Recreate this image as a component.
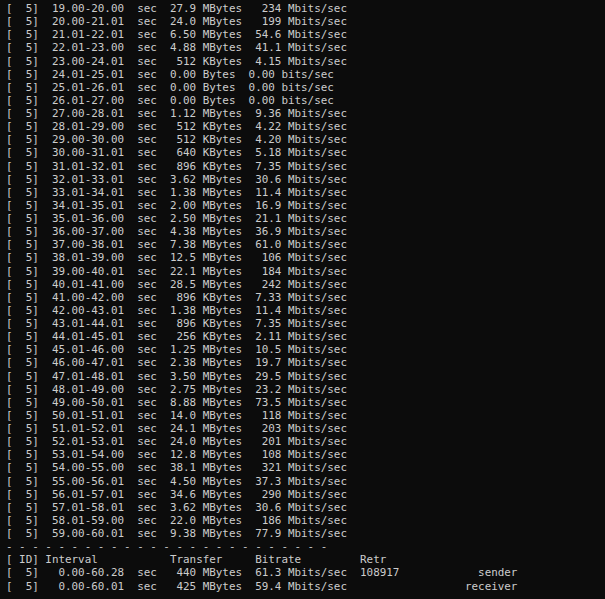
const rows: [string, string, string, string, string][] = [
  ["19.00-20.00", "27.9", "MBytes", "234", "Mbits"],
  ["20.00-21.01", "24.0", "MBytes", "199", "Mbits"],
  ["21.01-22.01", "6.50", "MBytes", "54.6", "Mbits"],
  ["22.01-23.00", "4.88", "MBytes", "41.1", "Mbits"],
  ["23.00-24.01", "512", "KBytes", "4.15", "Mbits"],
  ["24.01-25.01", "0.00", "Bytes", "0.00", "bits"],
  ["25.01-26.01", "0.00", "Bytes", "0.00", "bits"],
  ["26.01-27.00", "0.00", "Bytes", "0.00", "bits"],
  ["27.00-28.01", "1.12", "MBytes", "9.36", "Mbits"],
  ["28.01-29.00", "512", "KBytes", "4.22", "Mbits"],
  ["29.00-30.00", "512", "KBytes", "4.20", "Mbits"],
  ["30.00-31.01", "640", "KBytes", "5.18", "Mbits"],
  ["31.01-32.01", "896", "KBytes", "7.35", "Mbits"],
  ["32.01-33.01", "3.62", "MBytes", "30.6", "Mbits"],
  ["33.01-34.01", "1.38", "MBytes", "11.4", "Mbits"],
  ["34.01-35.01", "2.00", "MBytes", "16.9", "Mbits"],
  ["35.01-36.00", "2.50", "MBytes", "21.1", "Mbits"],
  ["36.00-37.00", "4.38", "MBytes", "36.9", "Mbits"],
  ["37.00-38.01", "7.38", "MBytes", "61.0", "Mbits"],
  ["38.01-39.00", "12.5", "MBytes", "106", "Mbits"],
  ["39.00-40.01", "22.1", "MBytes", "184", "Mbits"],
  ["40.01-41.00", "28.5", "MBytes", "242", "Mbits"],
  ["41.00-42.00", "896", "KBytes", "7.33", "Mbits"],
  ["42.00-43.01", "1.38", "MBytes", "11.4", "Mbits"],
  ["43.01-44.01", "896", "KBytes", "7.35", "Mbits"],
  ["44.01-45.01", "256", "KBytes", "2.11", "Mbits"],
  ["45.01-46.00", "1.25", "MBytes", "10.5", "Mbits"],
  ["46.00-47.01", "2.38", "MBytes", "19.7", "Mbits"],
  ["47.01-48.01", "3.50", "MBytes", "29.5", "Mbits"],
  ["48.01-49.00", "2.75", "MBytes", "23.2", "Mbits"],
  ["49.00-50.01", "8.88", "MBytes", "73.5", "Mbits"],
  ["50.01-51.01", "14.0", "MBytes", "118", "Mbits"],
  ["51.01-52.01", "24.1", "MBytes", "203", "Mbits"],
  ["52.01-53.01", "24.0", "MBytes", "201", "Mbits"],
  ["53.01-54.00", "12.8", "MBytes", "108", "Mbits"],
  ["54.00-55.00", "38.1", "MBytes", "321", "Mbits"],
  ["55.00-56.01", "4.50", "MBytes", "37.3", "Mbits"],
  ["56.01-57.01", "34.6", "MBytes", "290", "Mbits"],
  ["57.01-58.01", "3.62", "MBytes", "30.6", "Mbits"],
  ["58.01-59.00", "22.0", "MBytes", "186", "Mbits"],
  ["59.00-60.01", "9.38", "MBytes", "77.9", "Mbits"],
];

const pad = (s: string, n: number) => " ".repeat(Math.max(0, n - s.length)) + s;

const lines: string[] = rows.map(
  ([iv, t, tu, b, bu]) =>
    `[  5]  ${iv}  sec  ${pad(t, 4)} ${tu}  ${pad(b, 4)} ${bu}/sec`
);
lines.push("- - - - - - - - - - - - - - - - - - - - - - - - -");
lines.push("[ ID] Interval           Transfer     Bitrate         Retr");
lines.push("[  5]   0.00-60.28  sec   440 MBytes  61.3 Mbits/sec  108917            sender");
lines.push("[  5]   0.00-60.01  sec   425 MBytes  59.4 Mbits/sec                  receiver");

export default function App() {
  return (
    <div className="w-[605px] h-[599px] overflow-hidden bg-[#0c0c0c] pt-[2px] pl-[6px]">
      <div
        className="whitespace-pre text-[#cccccc] text-[10.9px] leading-[13.12px]"
        style={{ fontFamily: '"DejaVu Sans Mono", "Liberation Mono", monospace' }}
      >
        {lines.map((l, i) => (
          <div key={i}>{l}</div>
        ))}
      </div>
    </div>
  );
}
